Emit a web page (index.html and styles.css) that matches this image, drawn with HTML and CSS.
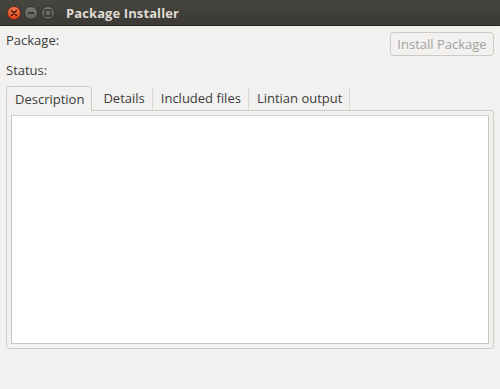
FILE: index.html
```html
<!DOCTYPE html>
<html lang="en">

<head>
    <meta charset="utf-8">
    <title>Package Installer</title>
    <link rel="stylesheet" href="styles.css">
</head>

<body>
    <div class="window">
        <header class="titlebar">
            <div class="knapper">
                <span class="knap luk">
                    <svg width="8" height="8" viewBox="0 0 8 8"><path d="M1.5 1.5l5 5M6.5 1.5l-5 5" stroke="#3a1a10" stroke-width="1.4" stroke-linecap="round"/></svg>
                </span>
                <span class="knap">
                    <svg width="8" height="8" viewBox="0 0 8 8"><path d="M1 4h6" stroke="#2e2d2a" stroke-width="1.6"/></svg>
                </span>
                <span class="knap">
                    <svg width="8" height="8" viewBox="0 0 8 8"><rect x="1" y="1" width="6" height="6" fill="none" stroke="#2e2d2a" stroke-width="1.3"/></svg>
                </span>
            </div>
            <h1>Package Installer</h1>
        </header>

        <main class="indhold">
            <div class="raekke">
                <span class="label">Package:</span>
                <button class="install" disabled>Install Package</button>
            </div>
            <div class="raekke status">
                <span class="label">Status:</span>
            </div>

            <nav class="faner">
                <span class="fane valgt">Description</span>
                <span class="fane">Details</span>
                <span class="fane">Included files</span>
                <span class="fane">Lintian output</span>
            </nav>
            <section class="ramme">
                <div class="tekstfelt"></div>
            </section>
        </main>
    </div>
</body>

</html>
```

FILE: styles.css
```css
* {
    margin: 0;
    box-sizing: border-box;
}

body {
    background-color: #f2f1f0;
    font-family: 'Open Sans', 'DejaVu Sans', sans-serif;
    font-size: 13px;
    color: #3c3c3c;
}

.window {
    width: 500px;
    height: 389px;
    display: flex;
    flex-direction: column;
}

.titlebar {
    height: 26px;
    background: linear-gradient(#46453f, #3b3a35);
    border-bottom: 1px solid #2a2926;
    display: flex;
    align-items: center;
    padding-left: 7px;
}

.knapper {
    display: flex;
    gap: 3px;
}

.knap {
    width: 14px;
    height: 14px;
    border-radius: 50%;
    background: linear-gradient(#7a7973, #5c5b56);
    border: 1px solid #34332f;
    display: flex;
    align-items: center;
    justify-content: center;
}

.luk {
    background: linear-gradient(#f67a4e, #e0471a);
    border-color: #6e2a12;
}

h1 {
    font-size: 13px;
    font-weight: 700;
    color: #dfdbd2;
    margin-left: 11px;
    letter-spacing: 0.1px;
}

.indhold {
    flex: 1;
    padding: 6px 6px 0 6px;
    display: flex;
    flex-direction: column;
}

.raekke {
    display: flex;
    justify-content: space-between;
    align-items: flex-start;
    height: 24px;
}

.raekke .label {
    line-height: 16px;
}

.status {
    margin-top: 6px;
}

.install {
    height: 24px;
    width: 104px;
    border: 1px solid #cdcac5;
    border-radius: 4px;
    background-color: #f2f1f0;
    color: #a3a29e;
    font-family: 'Open Sans', 'DejaVu Sans', sans-serif;
    font-size: 13px;
    padding: 0;
}

.faner {
    display: flex;
    height: 24px;
    align-items: flex-end;
    font-size: 13px;
}

.fane {
    padding: 0 7px 0 8px;
    height: 22px;
    line-height: 21px;
    border-right: 1px solid #dcd9d5;
}

.valgt {
    height: 25px;
    line-height: 25px;
    padding: 0 7px 0 8px;
    margin-right: 3px;
    border: 1px solid #cfccc7;
    border-bottom: none;
    border-radius: 4px 4px 0 0;
    background-color: #f2f1f0;
    position: relative;
    top: 1px;
}

.ramme {
    height: 239px;
    border: 1px solid #cfccc7;
    border-radius: 0 3px 3px 3px;
    padding: 4px;
}

.tekstfelt {
    height: 100%;
    background-color: #ffffff;
    border: 1px solid #c8c5c0;
    border-top-color: #d6d3ce;
}
```
